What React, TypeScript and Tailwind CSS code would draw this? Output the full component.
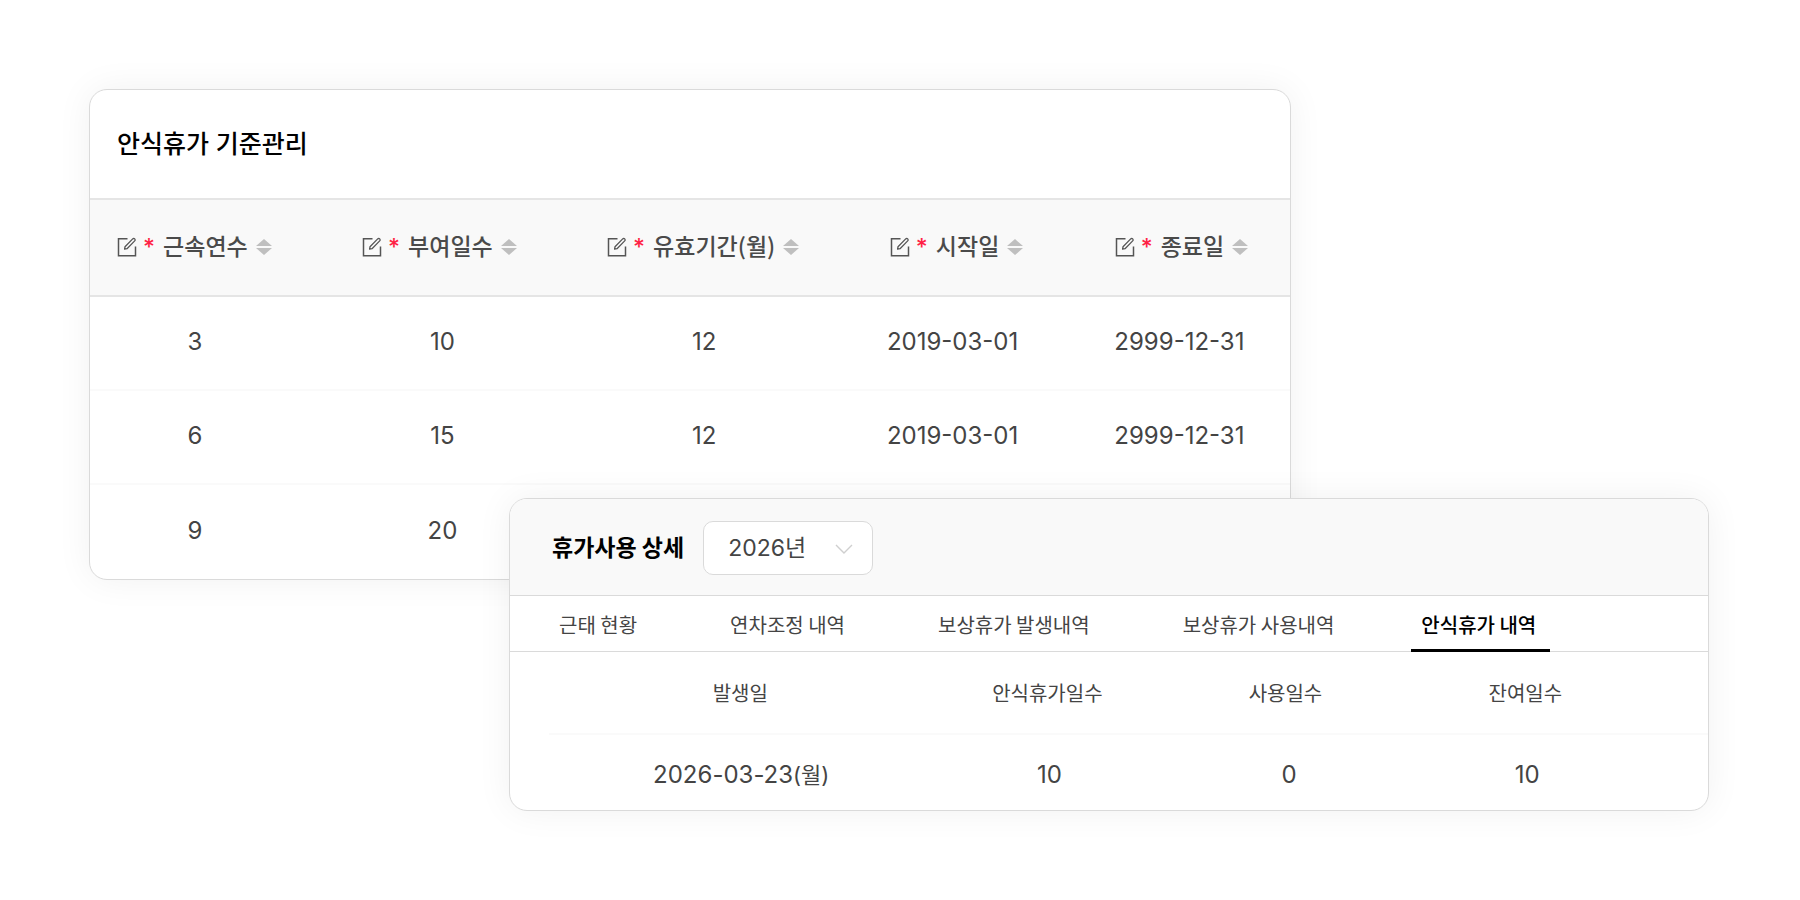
import React from "react";

const kr = "font-['Noto_Sans_CJK_KR',sans-serif]";
const num = "font-['Inter','Noto_Sans_CJK_KR',sans-serif]";

const EditIcon = () => (
  <svg viewBox="0 0 20 20" className="size-5 shrink-0" fill="none" stroke="#555" strokeWidth="1.5" aria-hidden="true">
    <path d="M10.500 1.800H1.500v17h17V9.500" />
    <path d="M8 9.800 15.700 1.900a1.400 1.400 0 0 1 2 0 1.400 1.400 0 0 1 0 2L10 11.700 7.600 12.200Z" strokeWidth="1.300" strokeLinejoin="round" />
  </svg>
);

const SortIcon = () => (
  <svg viewBox="0 0 16 16" className="size-4 shrink-0" fill="#bfbfbf" aria-hidden="true">
    <path d="M8 0l8 7H0zM8 16l8-7H0z" />
  </svg>
);

const standardColumns = [
  { label: "근속연수", width: "w-[17.4%]", head: "", cell: "pl-px" },
  { label: "부여일수", width: "w-[23.6%]", head: "pr-[2px]", cell: "pl-1" },
  { label: "유효기간(월)", width: "w-[20.2%]", head: "", cell: "pl-[2px]" },
  { label: "시작일", width: "w-[21.7%]", head: "pl-1", cell: "pr-1" },
  { label: "종료일", width: "w-[17.1%]", head: "pr-3", cell: "pr-4" },
];

const standardRows = [
  ["3", "10", "12", "2019-03-01", "2999-12-31"],
  ["6", "15", "12", "2019-03-01", "2999-12-31"],
  ["9", "20", "12", "2019-03-01", "2999-12-31"],
];

const tabs = ["근태 현황", "연차조정 내역", "보상휴가 발생내역", "보상휴가 사용내역", "안식휴가 내역"];

const detailColumns = [
  { label: "발생일", width: "w-[33%]", head: "", cell: "pl-[2px]" },
  { label: "안식휴가일수", width: "w-[20%]", head: "", cell: "pl-1" },
  { label: "사용일수", width: "w-[21%]", head: "pl-px", cell: "pl-2" },
  { label: "잔여일수", width: "w-[26%]", head: "pr-16", cell: "pr-[60px]" },
];

const detailRow = [
  <>2026-03-23<span className="text-[22px]">(월)</span></>,
  "10",
  "0",
  "10",
];

const cardClass =
  "min-w-0 overflow-hidden rounded-[18px] border border-[#dadada] bg-white shadow-[0_0_36px_rgba(0,0,0,0.06)]";

function StandardCard() {
  return (
    <section className={`${cardClass} col-start-1 col-end-3`}>
      <h2 className={`${num} flex h-[108px] items-center px-[27px] pt-px text-[25px] font-medium text-black`}>안식휴가 기준관리</h2>
      <table className="w-full table-fixed border-collapse text-center text-[#444]">
        <thead>
          <tr className="h-[97px] border-y-2 border-[#e5e5e5] bg-[#f9f9f9]">
            {standardColumns.map((c) => (
              <th key={c.label} scope="col" className={`p-0 font-medium ${c.width} ${c.head}`}>
                <button type="button" className={`${kr} inline-flex items-center pb-[2px] text-[23px] font-medium whitespace-nowrap text-[#4a4a4a]`}>
                  <EditIcon />
                  <span className={`${num} ml-[6px] w-[10px] text-[23px] leading-6 font-medium text-[#ff1f44]`}>*</span>
                  <span className="ml-[10px] pb-[2px]">{c.label}</span>
                  <span className="ml-2"><SortIcon /></span>
                </button>
              </th>
            ))}
          </tr>
        </thead>
        <tbody className={`${num} text-2xl`}>
          {standardRows.map((row) => (
            <tr key={row[0]} className="h-[94px] border-b-2 border-[#fafafa] last:h-[95px] last:border-0">
              {row.map((v, i) => (
                <td key={i} className={`p-0 pb-[2px] ${standardColumns[i].cell}`}>{v}</td>
              ))}
            </tr>
          ))}
        </tbody>
      </table>
    </section>
  );
}

function DetailCard() {
  return (
    <section className={`${cardClass} relative col-start-2 col-end-4 -mt-[82px]`}>
      <header className="flex h-[97px] items-center gap-[19px] border-b border-[#dadada] bg-[#f9f9f9] pt-[2px] pl-[42px]">
        <h2 className={`${kr} pb-1 text-[23px] font-bold text-black`}>휴가사용 상세</h2>
        <div className="relative">
          <select
            aria-label="연도"
            className={`${num} h-[54px] w-[170px] appearance-none rounded-[10px] border border-[#dadada] bg-white pl-6 text-[23px] text-[#444]`}
          >
            <option>2026년</option>
          </select>
          <svg viewBox="0 0 18 10" className="pointer-events-none absolute top-[23px] right-5 h-[10px] w-[18px]" fill="none" stroke="#cfcfcf" strokeWidth="1.4" aria-hidden="true">
            <path d="M1 1l8 8 8-8" />
          </svg>
        </div>
      </header>
      <nav className="border-b border-[#dadada] pl-[33px]">
        <div role="tablist" className="flex h-[55px] gap-[61px]">
          {tabs.map((t, i) => (
            <button
              key={t}
              type="button"
              role="tab"
              aria-selected={i === 4}
              className={`${kr} -mb-px border-b-[3px] pt-1 text-xl whitespace-nowrap ${
                i === 4 ? "border-black pr-[14px] pl-[10px] font-medium text-black" : "border-transparent px-4 text-[#444]"
              }`}
            >
              {t}
            </button>
          ))}
        </div>
      </nav>
      <div className="pl-[39px]">
        <table className="w-full table-fixed border-collapse text-center text-[#444]">
          <thead>
            <tr className="h-[82px] border-b-2 border-[#fafafa]">
              {detailColumns.map((c) => (
                <th key={c.label} scope="col" className={`${kr} p-0 text-xl font-normal ${c.width} ${c.head}`}>
                  {c.label}
                </th>
              ))}
            </tr>
          </thead>
          <tbody className={`${num} text-2xl`}>
            <tr className="h-[76px]">
              {detailRow.map((v, i) => (
                <td key={i} className={`p-0 pt-1 ${detailColumns[i].cell}`}>{v}</td>
              ))}
            </tr>
          </tbody>
        </table>
      </div>
    </section>
  );
}

export default function App() {
  return (
    <main className="grid min-h-screen grid-cols-[420fr_782fr_418fr] content-start bg-white pt-[89px] pr-[91px] pb-[89px] pl-[89px]">
      <StandardCard />
      <DetailCard />
    </main>
  );
}
